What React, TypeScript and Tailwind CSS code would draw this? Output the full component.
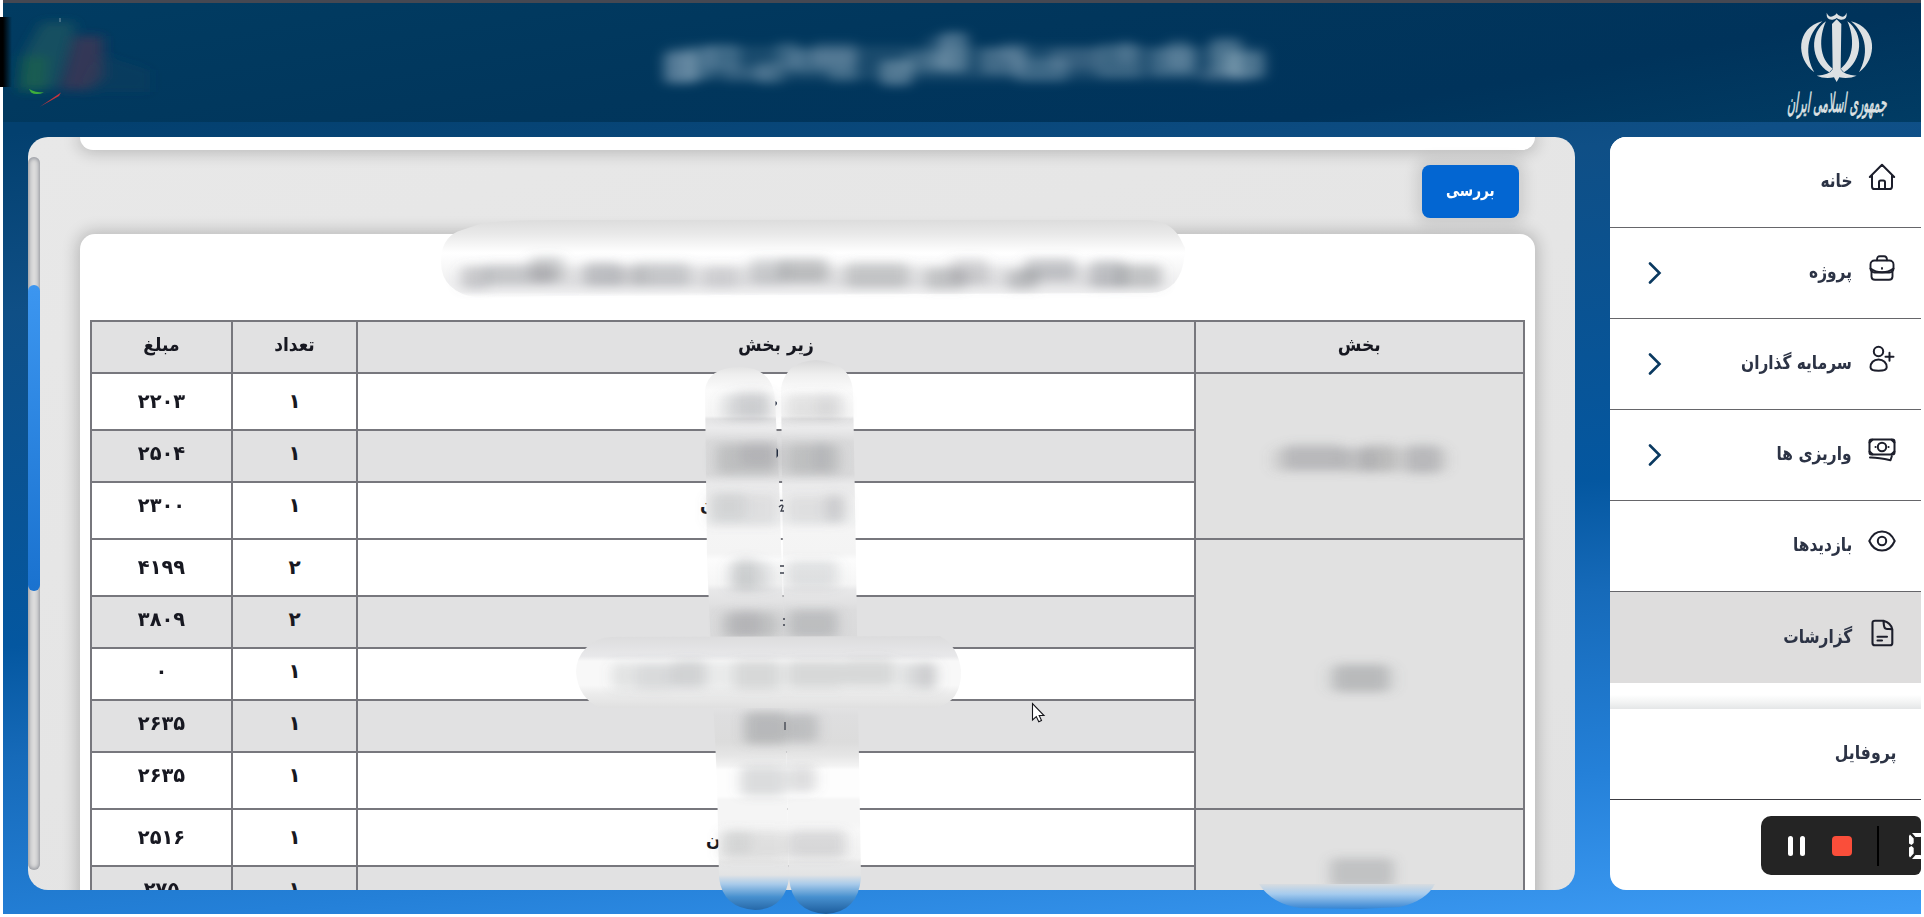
import React from "react";

const ink = "#1c1e2b";

function HomeIcon() {
  return (
    <svg width="28" height="28" viewBox="0 0 28 28" fill="none" stroke={ink} strokeWidth="2" strokeLinecap="round" strokeLinejoin="round">
      <path d="M1.8 14 14 1.8 26.2 14M4 12.2V23.4Q4 26 6.6 26H21.400Q24 26 24 23.400V12.200M11 26V19.200Q11 17.500 12.700 17.500H15.300Q17 17.500 17 19.200V26" />
    </svg>
  );
}
function BriefcaseIcon() {
  return (
    <svg width="28" height="28" viewBox="0 0 28 28" fill="none" stroke={ink} strokeWidth="1.9" strokeLinecap="round" strokeLinejoin="round">
      <rect x="2.500" y="6.500" width="23" height="12" rx="4" />
      <path d="M9 6.200C9 3 10 2.200 12 2.200H16C18 2.200 19 3 19 6.200M2.500 14.500C9 19.500 19 19.500 25.500 14.500M3.500 17.500V22.500Q3.500 25.800 7 25.800H21Q24.500 25.800 24.500 22.500V17.500M14 14v.8" />
    </svg>
  );
}
function UserPlusIcon() {
  return (
    <svg width="28" height="28" viewBox="0 0 28 28" fill="none" stroke={ink} strokeWidth="2" strokeLinecap="round" strokeLinejoin="round">
      <circle cx="10.500" cy="6.500" r="4.700" />
      <path d="M10.500 14.500C5.500 14.500 2.500 18 2.500 22.200 2.500 24.500 6 25.700 10.500 25.700S18.700 24.500 18.700 22.200C18.700 18 15.500 14.500 10.500 14.500ZM17.500 11.700H25.500M21.500 7.700V15.700" />
    </svg>
  );
}
function CashIcon() {
  return (
    <svg width="28" height="28" viewBox="0 0 28 28" fill="none" stroke={ink} strokeWidth="2" strokeLinecap="round" strokeLinejoin="round">
      <rect x="1.500" y="3.500" width="25" height="15" rx="2" />
      <circle cx="14" cy="11" r="4.200" />
      <path d="M7.500 11h.1M20.500 11h.1M1.600 6.500 4.500 3.800M23.500 3.800 26.400 6.500M1.600 15.500 4.500 18.200M23.500 18.200 26.400 15.500M2 21.500C9 21.300 15 22.500 22.500 24.200L23.800 20.200" />
    </svg>
  );
}
function EyeIcon() {
  return (
    <svg width="28" height="28" viewBox="0 0 28 28" fill="none" stroke={ink} strokeWidth="2" strokeLinejoin="round">
      <path d="M1.300 14C4 7.800 8.500 4.400 14 4.400S24 7.800 26.700 14C24 20.200 19.500 23.600 14 23.600S4 20.200 1.300 14Z" />
      <circle cx="14" cy="14" r="4.200" />
    </svg>
  );
}
function FileIcon() {
  return (
    <svg width="28" height="28" viewBox="0 0 28 28" fill="none" stroke={ink} strokeWidth="2.100" strokeLinecap="round" strokeLinejoin="round">
      <path d="M7 1.700H15.500C20.500 3 23.500 6 24.300 10.500V24Q24.300 26.300 22 26.300H7Q4.500 26.300 4.500 24V4Q4.500 1.700 7 1.700ZM15.500 2C16 6 15.500 9.500 18 9.800 20 10.200 22 9.800 24 10.300M9.500 17.800H19M9.500 21.500H14" />
    </svg>
  );
}

type Item = { label: string; icon: React.ReactNode; arrow?: boolean; active?: boolean };
const items: Item[] = [
  { label: "خانه", icon: <HomeIcon /> },
  { label: "پروژه", icon: <BriefcaseIcon />, arrow: true },
  { label: "سرمایه گذاران", icon: <UserPlusIcon />, arrow: true },
  { label: "واریزی ها", icon: <CashIcon />, arrow: true },
  { label: "بازدیدها", icon: <EyeIcon /> },
  { label: "گزارشات", icon: <FileIcon />, active: true },
];

function Sidebar() {
  return (
    <aside dir="rtl" className="flex h-[753px] w-[311px] flex-col overflow-hidden rounded-l-[16px] bg-white text-[#2c3345]">
      {items.map((it) => (
        <div
          key={it.label}
          className={
            it.active
              ? "flex h-[91px] shrink-0 items-center bg-[#dedddd] pr-[25px] pl-[50px]"
              : "flex h-[91px] shrink-0 items-center border-b-[1.5px] border-[#66666a] bg-white pr-[25px] pl-[50px]"
          }
        >
          <span className="-mt-2.5">{it.icon}</span>
          <span className="mr-[16px] origin-right scale-x-[0.81] pb-[3px] text-[19px] leading-none font-bold">{it.label}</span>
          {it.arrow && (
            <svg className="mr-auto -ml-[12px]" width="14" height="22" viewBox="0 0 14 22" fill="none" stroke="#0a3960" strokeWidth="2.600" strokeLinecap="round">
              <path d="M2 1.500 11.500 11 2 20.500" />
            </svg>
          )}
        </div>
      ))}
      <div className="h-[26px] shrink-0 bg-[linear-gradient(to_bottom,#fff_45%,#f2f3f3_75%,#e4e6e7)]" />
      <div className="flex h-[91px] shrink-0 items-center border-b border-[#3c3c42] pr-[25px] pb-1">
        <span className="origin-right scale-x-[0.83] text-[19px] font-bold">پروفایل</span>
      </div>
    </aside>
  );
}

type Row = { amount: string; count: string; h: string; shaded?: boolean; low?: boolean; span?: number };
const rows: Row[] = [
  { amount: "۲۲۰۳", count: "۱", h: "h-[57px]", low: true, span: 3 },
  { amount: "۲۵۰۴", count: "۱", h: "h-[52px]", shaded: true },
  { amount: "۲۳۰۰", count: "۱", h: "h-[57px]" },
  { amount: "۴۱۹۹", count: "۲", h: "h-[57px]", low: true, span: 5 },
  { amount: "۳۸۰۹", count: "۲", h: "h-[52px]", shaded: true },
  { amount: "۰", count: "۱", h: "h-[52px]" },
  { amount: "۲۶۳۵", count: "۱", h: "h-[52px]", shaded: true },
  { amount: "۲۶۳۵", count: "۱", h: "h-[57px]" },
  { amount: "۲۵۱۶", count: "۱", h: "h-[57px]", low: true, span: 2 },
  { amount: "۲۷۵", count: "۱", h: "h-[52px]", shaded: true },
];

function ReportTable() {
  const line = "border-2 border-[#77777d] p-0 align-top";
  return (
    <table dir="rtl" className="w-[1434px] table-fixed border-collapse text-center text-[20px] leading-[20px] font-bold text-[#171821]">
      <colgroup>
        <col className="w-[328.500px]" />
        <col className="w-[838px]" />
        <col className="w-[125px]" />
        <col className="w-[141px]" />
      </colgroup>
      <thead>
        <tr className="h-[52px] bg-[#e1e1e2]">
          {["بخش", "زیر بخش", "تعداد", "مبلغ"].map((h) => (
            <th key={h} className={line}><div className="scale-x-[0.9] pt-[12px] text-[19px]">{h}</div></th>
          ))}
        </tr>
      </thead>
      <tbody>
        {rows.map((r, i) => (
          <tr key={i} className={(r.shaded ? "bg-[#e1e1e2] " : "bg-white ") + r.h}>
            {r.span && <td rowSpan={r.span} className={line + " bg-[#e1e1e1]"} />}
            <td className={line} />
            <td className={line}><div className={r.low ? "pt-[17px]" : "pt-[12px]"}>{r.count}</div></td>
            <td className={line}><div className={r.low ? "scale-x-[0.97] pt-[17px]" : "scale-x-[0.97] pt-[12px]"}>{r.amount}</div></td>
          </tr>
        ))}
      </tbody>
    </table>
  );
}

function Emblem() {
  const half = (
    <>
      <path d="M228 64C178 98 180 182 238 217L248 206C207 176 206 112 228 64Z" />
      <path d="M217 64C137 84 137 176 193 217C164 166 168 104 217 64Z" />
    </>
  );
  return (
    <svg width="174" height="119" viewBox="0 9 522 357" fill="#dde1e3">
      {half}
      <g transform="translate(520 0) scale(-1 1)">{half}</g>
      <path d="M260 58L274 72L272 208Q282 226 320 227Q298 237 268 232L260 246L252 232Q222 237 200 227Q238 226 248 208L246 72Z" />
      <path d="M230 38Q237 54 248 49Q257 46 260 40Q263 46 272 49Q283 54 290 38Q292 61 272 59Q263 58 260 54Q257 58 248 59Q228 61 230 38Z" />
      <text transform="translate(409 336) skewX(-8) scale(1 1.900)" direction="rtl" textAnchor="start" textLength="298" lengthAdjust="spacingAndGlyphs" fontSize="42" stroke="#dde1e3" strokeWidth="1.200" fontFamily="'DejaVu Sans', sans-serif">جمهوری اسلامی ایران</text>
    </svg>
  );
}

type Blob = [number, number, number, number, number];
const headerBlobs: Blob[] = [
  [666, 46, 600, 34, 0.12],
  [664, 52, 34, 32, 0.36], [684, 46, 30, 34, 0.18], [704, 44, 36, 26, 0.22], [722, 66, 50, 16, 0.14], [756, 62, 28, 22, 0.2],
  [776, 42, 24, 28, 0.18], [790, 50, 66, 22, 0.22], [812, 42, 46, 24, 0.16], [828, 68, 30, 14, 0.2], [880, 60, 32, 26, 0.34],
  [904, 52, 40, 20, 0.2], [926, 36, 24, 34, 0.14], [940, 32, 28, 40, 0.34], [980, 48, 44, 26, 0.24], [1000, 42, 28, 20, 0.14],
  [1014, 58, 54, 24, 0.22], [1050, 48, 50, 22, 0.16], [1096, 44, 46, 34, 0.2], [1118, 40, 16, 24, 0.14], [1150, 48, 46, 28, 0.22],
  [1166, 40, 26, 30, 0.2], [1210, 38, 32, 36, 0.3], [1226, 52, 38, 26, 0.3], [1200, 70, 50, 12, 0.16],
];
const titleBlobs: Blob[] = [
  [462, 266, 700, 22, 0.15],
  [460, 266, 30, 24, 0.2], [484, 264, 70, 20, 0.24], [530, 256, 34, 26, 0.28], [584, 262, 38, 24, 0.32], [616, 266, 30, 20, 0.14],
  [632, 262, 58, 24, 0.24], [704, 266, 34, 22, 0.16], [750, 258, 36, 26, 0.24], [780, 258, 48, 24, 0.34], [846, 262, 62, 26, 0.26],
  [926, 268, 40, 22, 0.26], [950, 258, 38, 26, 0.22], [1008, 270, 30, 20, 0.3], [1024, 258, 52, 22, 0.32], [1090, 260, 36, 28, 0.32],
  [1116, 264, 46, 24, 0.26],
];
const columnBlobs: Blob[] = [
  [722, 394, 50, 26, 0.2], [736, 390, 32, 28, 0.14], [716, 444, 62, 30, 0.26], [740, 442, 38, 24, 0.14], [708, 494, 70, 32, 0.14],
  [712, 492, 34, 28, 0.1], [728, 562, 46, 28, 0.18], [734, 558, 24, 32, 0.18], [722, 612, 56, 26, 0.26], [732, 610, 28, 28, 0.14],
  [744, 712, 44, 32, 0.34], [740, 766, 46, 30, 0.24], [720, 830, 66, 30, 0.16], [724, 830, 28, 24, 0.1],
  [786, 394, 58, 26, 0.16], [816, 394, 20, 24, 0.08], [786, 444, 54, 30, 0.26], [814, 442, 14, 30, 0.12], [786, 496, 60, 28, 0.14],
  [826, 494, 18, 28, 0.16], [786, 560, 52, 28, 0.18], [788, 610, 50, 28, 0.28], [788, 714, 30, 28, 0.28], [788, 766, 28, 26, 0.22],
  [788, 830, 58, 28, 0.22],
];
const barBlobs: Blob[] = [
  [612, 662, 326, 28, 0.1],
  [612, 664, 18, 24, 0.08], [634, 664, 40, 26, 0.14], [672, 660, 34, 28, 0.2], [734, 660, 46, 30, 0.16], [788, 660, 56, 28, 0.16],
  [844, 658, 50, 28, 0.16], [904, 664, 32, 24, 0.14], [920, 662, 14, 28, 0.14],
];
const sectionBlobs: Blob[] = [
  [1272, 448, 176, 24, 0.16],
  [1284, 444, 60, 26, 0.24], [1340, 448, 34, 24, 0.16], [1362, 444, 34, 28, 0.22], [1406, 444, 34, 30, 0.24],
  [1334, 664, 54, 28, 0.28], [1326, 666, 70, 26, 0.1], [1330, 858, 64, 30, 0.28],
];

function Blobs({ data, fill }: { data: Blob[]; fill: string }) {
  return (
    <g filter="url(#soft)" fill={fill}>
      {data.map(([x, y, w, h, o], i) => (
        <rect key={i} x={x} y={y} width={w} height={h} opacity={o} rx="6" />
      ))}
    </g>
  );
}

const streak: [number, string][] = [
  [360, "#d8d8d9"], [374, "#eeeeee"], [390, "#fbfbfb"], [416, "#f6f6f6"], [419, "#e4e4e5"], [428, "#ebebec"], [442, "#dadadb"],
  [474, "#d9d9da"], [484, "#e9e9ea"], [500, "#f0f0f0"], [522, "#f1f2f2"], [530, "#f5f5f5"], [553, "#f4f4f4"], [560, "#fcfcfc"],
  [584, "#f6f6f6"], [590, "#e8e8e9"], [602, "#e2e2e3"], [610, "#dcdcdd"], [636, "#dadadb"], [640, "#e8e8e8"], [705, "#e4e4e4"],
  [715, "#dededf"], [742, "#dcdcdc"], [755, "#e5e5e5"], [766, "#f3f3f3"], [770, "#fdfdfd"], [796, "#fdfdfd"], [800, "#f5f5f5"],
  [822, "#f5f5f5"], [830, "#f8f8f8"], [858, "#f2f2f2"], [862, "#e9e9e9"], [875, "#e2e3e4"], [884, "#a9cbea"], [897, "#4790cf"], [914, "#1c5c9c"],
];

function Smudges() {
  return (
    <svg className="pointer-events-none absolute top-0 left-0" width="1924" height="917" viewBox="0 0 1924 917">
      <defs>
        <filter id="soft" x="-10%" y="-40%" width="120%" height="180%"><feGaussianBlur stdDeviation="6.500 5" /></filter>
        <linearGradient id="streak" gradientUnits="userSpaceOnUse" x1="0" y1="360" x2="0" y2="914">
          {streak.map(([y, c]) => <stop key={y} offset={(y - 360) / 554} stopColor={c} />)}
        </linearGradient>
        <linearGradient id="titleFade" x1="0" y1="0" x2="0" y2="1">
          <stop offset="0" stopColor="#dddddd" /><stop offset="0.180" stopColor="#e9e9e9" /><stop offset="0.420" stopColor="#ffffff" />
          <stop offset="0.800" stopColor="#f0f0f1" /><stop offset="0.920" stopColor="#f0f0f1" /><stop offset="1" stopColor="#ffffff" />
        </linearGradient>
        <linearGradient id="barFade" x1="0" y1="0" x2="0" y2="1">
          <stop offset="0" stopColor="#dcdcdd" /><stop offset="0.280" stopColor="#e8e8ea" /><stop offset="0.350" stopColor="#f8f8f8" />
          <stop offset="0.680" stopColor="#f8f8f8" /><stop offset="0.800" stopColor="#ececec" /><stop offset="1" stopColor="#e0e0e0" />
        </linearGradient>
        <linearGradient id="spill" x1="0" y1="0" x2="0" y2="1">
          <stop offset="0" stopColor="#d8dcdf" /><stop offset="0.400" stopColor="#a5cbee" /><stop offset="1" stopColor="#3584d2" />
        </linearGradient>
        <linearGradient id="edge" x1="0" y1="0" x2="1" y2="0">
          <stop offset="0" stopColor="#000" /><stop offset="1" stopColor="#000" stopOpacity="0" />
        </linearGradient>
      </defs>

      <rect x="0" y="17" width="3" height="70" fill="#000" />
      <rect x="3" y="17" width="9" height="70" fill="url(#edge)" />
      <g filter="url(#soft)">
        <path d="M42 22H76L56 88H20L26 50Z" fill="#2c625f" opacity="0.500" />
        <path d="M20 56H48L46 92H18Z" fill="#1a7040" opacity="0.420" />
        <path d="M74 36H103V78L88 90H60Z" fill="#5c3550" opacity="0.550" />
        <path d="M100 54L150 70V92H80Z" fill="#1f3f5c" opacity="0.200" />
      </g>
      <path d="M29 89Q35 92.500 44 92.500Q36 95.500 31 92.500Z" fill="#3fae3b" />
      <path d="M39.500 107 61 92.500 59 96Z" fill="#c3363e" />
      <path d="M60 18v4" stroke="#9db0bd" strokeWidth="0.800" />
      <Blobs data={headerBlobs} fill="#c4d6e2" />

      <path d="M480 224Q500 220 560 220H1145Q1170 220 1180 238L1185 248Q1184 292 1150 293L940 294L560 296L478 298Q441 292 441 262Q441 236 462 230Z" fill="url(#titleFade)" />
      <Blobs data={titleBlobs} fill="#707378" />

      <path d="M705 390Q708 367 741 367Q773 368 775 400L779 480L784 640L789 878Q785 909 755 910Q723 908 719 878L717 780L714 720L707 560Z" fill="url(#streak)" />
      <path d="M781 388Q786 361 816 360Q850 362 853 390L856 560L858 700L861 878Q858 912 826 914Q792 912 789 878L784 640Z" fill="url(#streak)" />
      <Blobs data={columnBlobs} fill="#707378" />
      <path d="M775.500 401q3 2 0 5ZM776.500 448l1.500 2v6l-1.500 2Z" fill="#222c3f" />
      <path d="M780 500.500h3M779 507q3-3 4-1l-2 5h3M780 566h4M780 573h4M783 619h2M783 625h2M785 722v8" stroke="#3c404c" strokeWidth="1.300" fill="none" />
      <path d="M612 637Q600 636 586 648Q576 658 576 672Q578 698 600 708H935Q962 702 961 670Q958 646 940 636Z" fill="url(#barFade)" />
      <Blobs data={barBlobs} fill="#707378" />

      <Blobs data={sectionBlobs} fill="#707378" />
      <path d="M1259 884H1435Q1426 901 1400 907L1360 909L1300 908Q1272 904 1259 884Z" fill="url(#spill)" />

      <path d="M1032.500 703.500V720L1036.300 716.600L1038.800 721.800L1041.500 720.500L1039.200 715.500H1044Z" fill="#fff" stroke="#15151a" strokeWidth="1.100" />
    </svg>
  );
}

function Recorder() {
  return (
    <div className="absolute top-[816px] left-[1761px] flex h-[59px] w-[160px] items-center overflow-hidden rounded-l-[10px] rounded-r-[6px] bg-[#242424] pl-[27px]">
      <div className="h-5 w-[5px] shrink-0 rounded-full bg-white" />
      <div className="ml-[7px] h-5 w-[5px] shrink-0 rounded-full bg-white" />
      <div className="ml-[27px] h-5 w-5 shrink-0 rounded-[4px] bg-[#fa4e3a]" />
      <div className="ml-[25px] h-10 w-[1.500px] shrink-0 bg-black" />
      <svg className="ml-[30px] shrink-0" width="18" height="26" viewBox="0 0 18 26" fill="#fff">
        <path d="M3 0H15L11.500 4H6.500ZM1 1.500 4.700 5.500V10L2.500 12 0 10.500V3ZM1 24.500 4.700 20.500V15L2.500 13 0 14.500V23ZM3 26H15L11.500 22H6.500Z" />
      </svg>
    </div>
  );
}

export default function App() {
  return (
    <div className="relative h-[917px] w-[1924px] overflow-hidden bg-white px-[3px] font-['DejaVu_Sans',sans-serif]">
      <div className="flex h-[914px] w-[1918px] flex-col bg-[linear-gradient(174deg,#03406f_12%,#0f4f86_28%,#0457a0_58%,#166ab9_68%,#2480d8_84%,#3e9cf5_100%)]">
        <div className="h-[3px] shrink-0 bg-[#454852]" />
        <header className="flex h-[119px] shrink-0 justify-end bg-[linear-gradient(170deg,#013c62_0%,#01365c_45%,#00335b_75%,#013c64_100%)]">
          <div className="mr-[-3px]"><Emblem /></div>
        </header>
        <div className="flex justify-between pt-[15px] pl-[25px]">
          <main className="flex h-[753px] w-[1547px] overflow-hidden rounded-[20px] bg-[linear-gradient(160deg,#e8e8e8,#e2e2e2)]">
            <div className="mt-5 h-[713px] w-3 shrink-0 rounded-full bg-[#dcdcdc] pt-[128px] shadow-[inset_0_0_4px_1px_#8b8e96]">
              <div className="h-[306px] w-3 rounded-full bg-[linear-gradient(to_bottom,#3c96f0,#1a72cf)]" />
            </div>
            <div className="ml-10 flex w-[1455px] shrink-0 flex-col">
              <div className="h-[13px] shrink-0 rounded-b-[15px] bg-white shadow-[0_0_16px_3px_rgba(0,0,0,0.200)]" />
              <div className="flex h-[84px] shrink-0 justify-end pt-[15px] pr-4">
                <button dir="rtl" className="h-[53px] w-[97px] rounded-[8px] bg-[#0366d2] pb-0.5 text-[17px] font-bold text-white shadow-[0_0_14px_6px_rgba(0,0,0,0.110)]"><span className="inline-block scale-x-[0.8]">بررسی</span></button>
              </div>
              <section className="h-[700px] shrink-0 rounded-t-[15px] bg-white pt-[86px] pl-[10px] shadow-[0_0_16px_3px_rgba(0,0,0,0.200)]">
                <ReportTable />
              </section>
            </div>
          </main>
          <Sidebar />
        </div>
      </div>
      <span className="absolute top-[828px] left-[706px] text-[17px] leading-[24px] font-bold text-[#171821]">ن</span>
      <span className="absolute top-[493px] left-[700px] text-[17px] leading-[24px] font-bold text-[#171821]">ن</span>
      <Smudges />
      <Recorder />
    </div>
  );
}
